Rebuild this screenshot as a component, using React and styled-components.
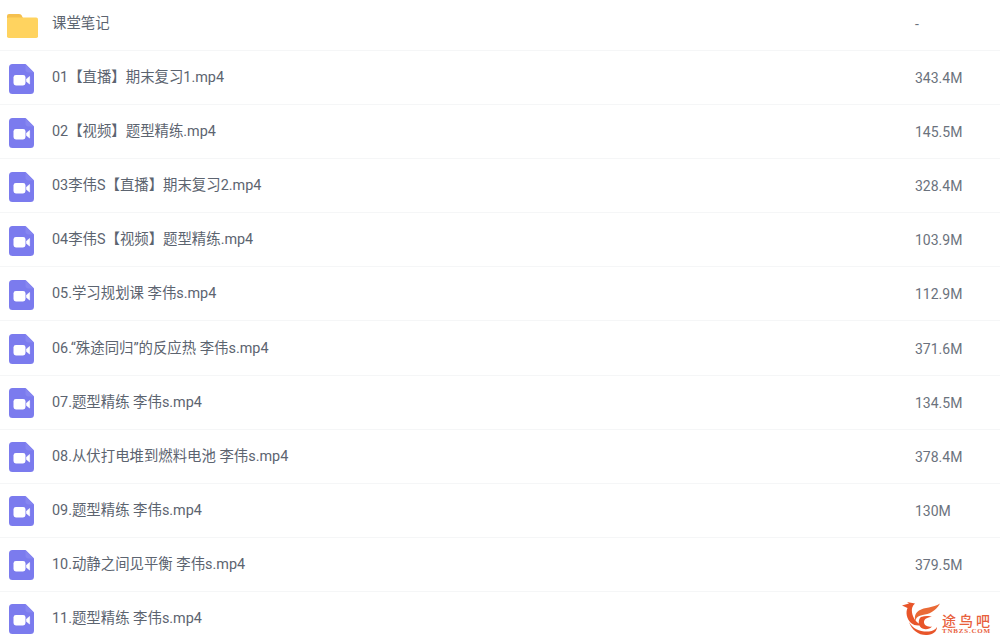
import React from "react";
import styled, { createGlobalStyle } from "styled-components";

const GlobalStyle = createGlobalStyle`
  html, body {
    margin: 0;
    padding: 0;
    background: #fff;
    overflow: hidden;
  }
`;

const files = [
  { name: "01【直播】期末复习1.mp4", size: "343.4M" },
  { name: "02【视频】题型精练.mp4", size: "145.5M" },
  { name: "03李伟S【直播】期末复习2.mp4", size: "328.4M" },
  { name: "04李伟S【视频】题型精练.mp4", size: "103.9M" },
  { name: "05.学习规划课 李伟s.mp4", size: "112.9M" },
  { name: "06.“殊途同归”的反应热 李伟s.mp4", size: "371.6M" },
  { name: "07.题型精练 李伟s.mp4", size: "134.5M" },
  { name: "08.从伏打电堆到燃料电池 李伟s.mp4", size: "378.4M" },
  { name: "09.题型精练 李伟s.mp4", size: "130M" },
  { name: "10.动静之间见平衡 李伟s.mp4", size: "379.5M" },
  { name: "11.题型精练 李伟s.mp4", size: "" },
];

const Page = styled.div`
  position: relative;
  width: 1000px;
  height: 639px;
  overflow: hidden;
  background: #fff;
  font-family: "Roboto", "Noto Sans CJK SC", sans-serif;
  color: #5c6470;
`;

const Row = styled.div`
  display: flex;
  align-items: center;
  box-sizing: border-box;
  height: ${(p) => (p.$first ? "51px" : "54.1px")};
  padding-top: ${(p) => (p.$first ? "0" : "2px")};
  padding-left: ${(p) => (p.$first ? "7px" : "9px")};
  border-bottom: 1px solid #f5f6f7;
`;

const IconSlot = styled.div`
  display: flex;
  flex: none;
  width: ${(p) => (p.$first ? "45px" : "43px")};
`;

const Name = styled.div`
  flex: 1;
  padding-bottom: ${(p) => (p.$first ? "2px" : "1px")};
  font-size: 14.4px;
  line-height: 20px;
  white-space: pre;
`;

const Size = styled.div`
  width: 85px;
  padding-bottom: ${(p) => (p.$first ? "2px" : "1px")};
  font-size: 14px;
  line-height: 20px;
  color: #6b727d;
`;

const Watermark = styled.div`
  position: absolute;
  left: 902px;
  top: 602px;
  display: flex;
  align-items: flex-end;
`;

const MarkText = styled.div`
  display: flex;
  flex-direction: column;
  margin-bottom: 1px;
  color: #e8603c;
`;

const MarkTitle = styled.span`
  font-family: "Noto Sans CJK SC", sans-serif;
  font-size: 14px;
  line-height: 15px;
  letter-spacing: 3px;
  font-weight: 500;
`;

const MarkUrl = styled.span`
  font-family: "Liberation Serif", serif;
  font-size: 7px;
  line-height: 7px;
  font-weight: 700;
  letter-spacing: 0.8px;
`;

const FolderIcon = () => (
  <svg width="31" height="25" viewBox="0 0 31 25">
    <path d="M0 3a2 2 0 0 1 2-2h10c1.500 0 2.500.7 3.200 2.500L16 5H2a2 2 0 0 0-2 2z" fill="#f5c04e" />
    <rect x="0" y="4.500" width="31" height="20.500" rx="1.800" fill="#ffd35f" />
  </svg>
);

const VideoIcon = () => (
  <svg width="25" height="30" viewBox="0 0 25 30">
    <path
      d="M3.500 0H16.500L25 8.500V26.500A3.500 3.500 0 0 1 21.500 30H3.500A3.500 3.500 0 0 1 0 26.500V3.500A3.500 3.500 0 0 1 3.500 0Z"
      fill="#7b7bee"
    />
    <path d="M16.500 0L25 8.500H19.500A3 3 0 0 1 16.500 5.500Z" fill="#8686f0" />
    <rect x="4.500" y="11" width="12" height="10.500" rx="2.400" fill="#fff" />
    <path d="M17.500 15L20.600 12.500V20L17.500 17.500Z" fill="#fff" stroke="#fff" strokeWidth="0.600" strokeLinejoin="round" />
  </svg>
);

const LogoMark = () => (
  <svg width="40" height="34" viewBox="0 0 40 34">
    <path
      d="M0 3.500L7 1.500L5 0L13 1.500C10 4 9.500 7 10 10.500C11 16.500 15 21.500 20 23C16 24 12 23.500 9 21C4.500 17 3.500 10 5.500 6Z"
      fill="#e8552a"
    />
    <path
      d="M38 1.500C33 10 27 12 20.500 13C15.500 14 13 16.500 14 20C12 16 12.500 11.500 17 8.500C22.500 5 31 6 38 1.500Z"
      fill="#ea6a36"
    />
    <path
      d="M19 15C23 13.500 28 13.500 30 15C26 15 22.500 16.500 22 19.500C21.500 23 25.500 25.500 30 24.500C27 28 20.500 28 18 24.500C16 21 16.500 17 19 15Z"
      fill="#e8552a"
    />
    <path
      d="M7 20C11 27 18 30 27 29.500C31 29 33.500 27.500 35 25C35 29.500 31 32.500 25 33C17 33.500 10 28.500 7 20Z"
      fill="#e8552a"
    />
  </svg>
);

const App = () => {
  return (
    <Page>
      <GlobalStyle />
      <Row $first>
        <IconSlot $first>
          <FolderIcon />
        </IconSlot>
        <Name $first>课堂笔记</Name>
        <Size $first>-</Size>
      </Row>
      {files.map((f) => (
        <Row key={f.name}>
          <IconSlot>
            <VideoIcon />
          </IconSlot>
          <Name>{f.name}</Name>
          <Size>{f.size}</Size>
        </Row>
      ))}
      <Watermark>
        <LogoMark />
        <MarkText>
          <MarkTitle>途鸟吧</MarkTitle>
          <MarkUrl>TNBZS.COM</MarkUrl>
        </MarkText>
      </Watermark>
    </Page>
  );
};

export default App;
